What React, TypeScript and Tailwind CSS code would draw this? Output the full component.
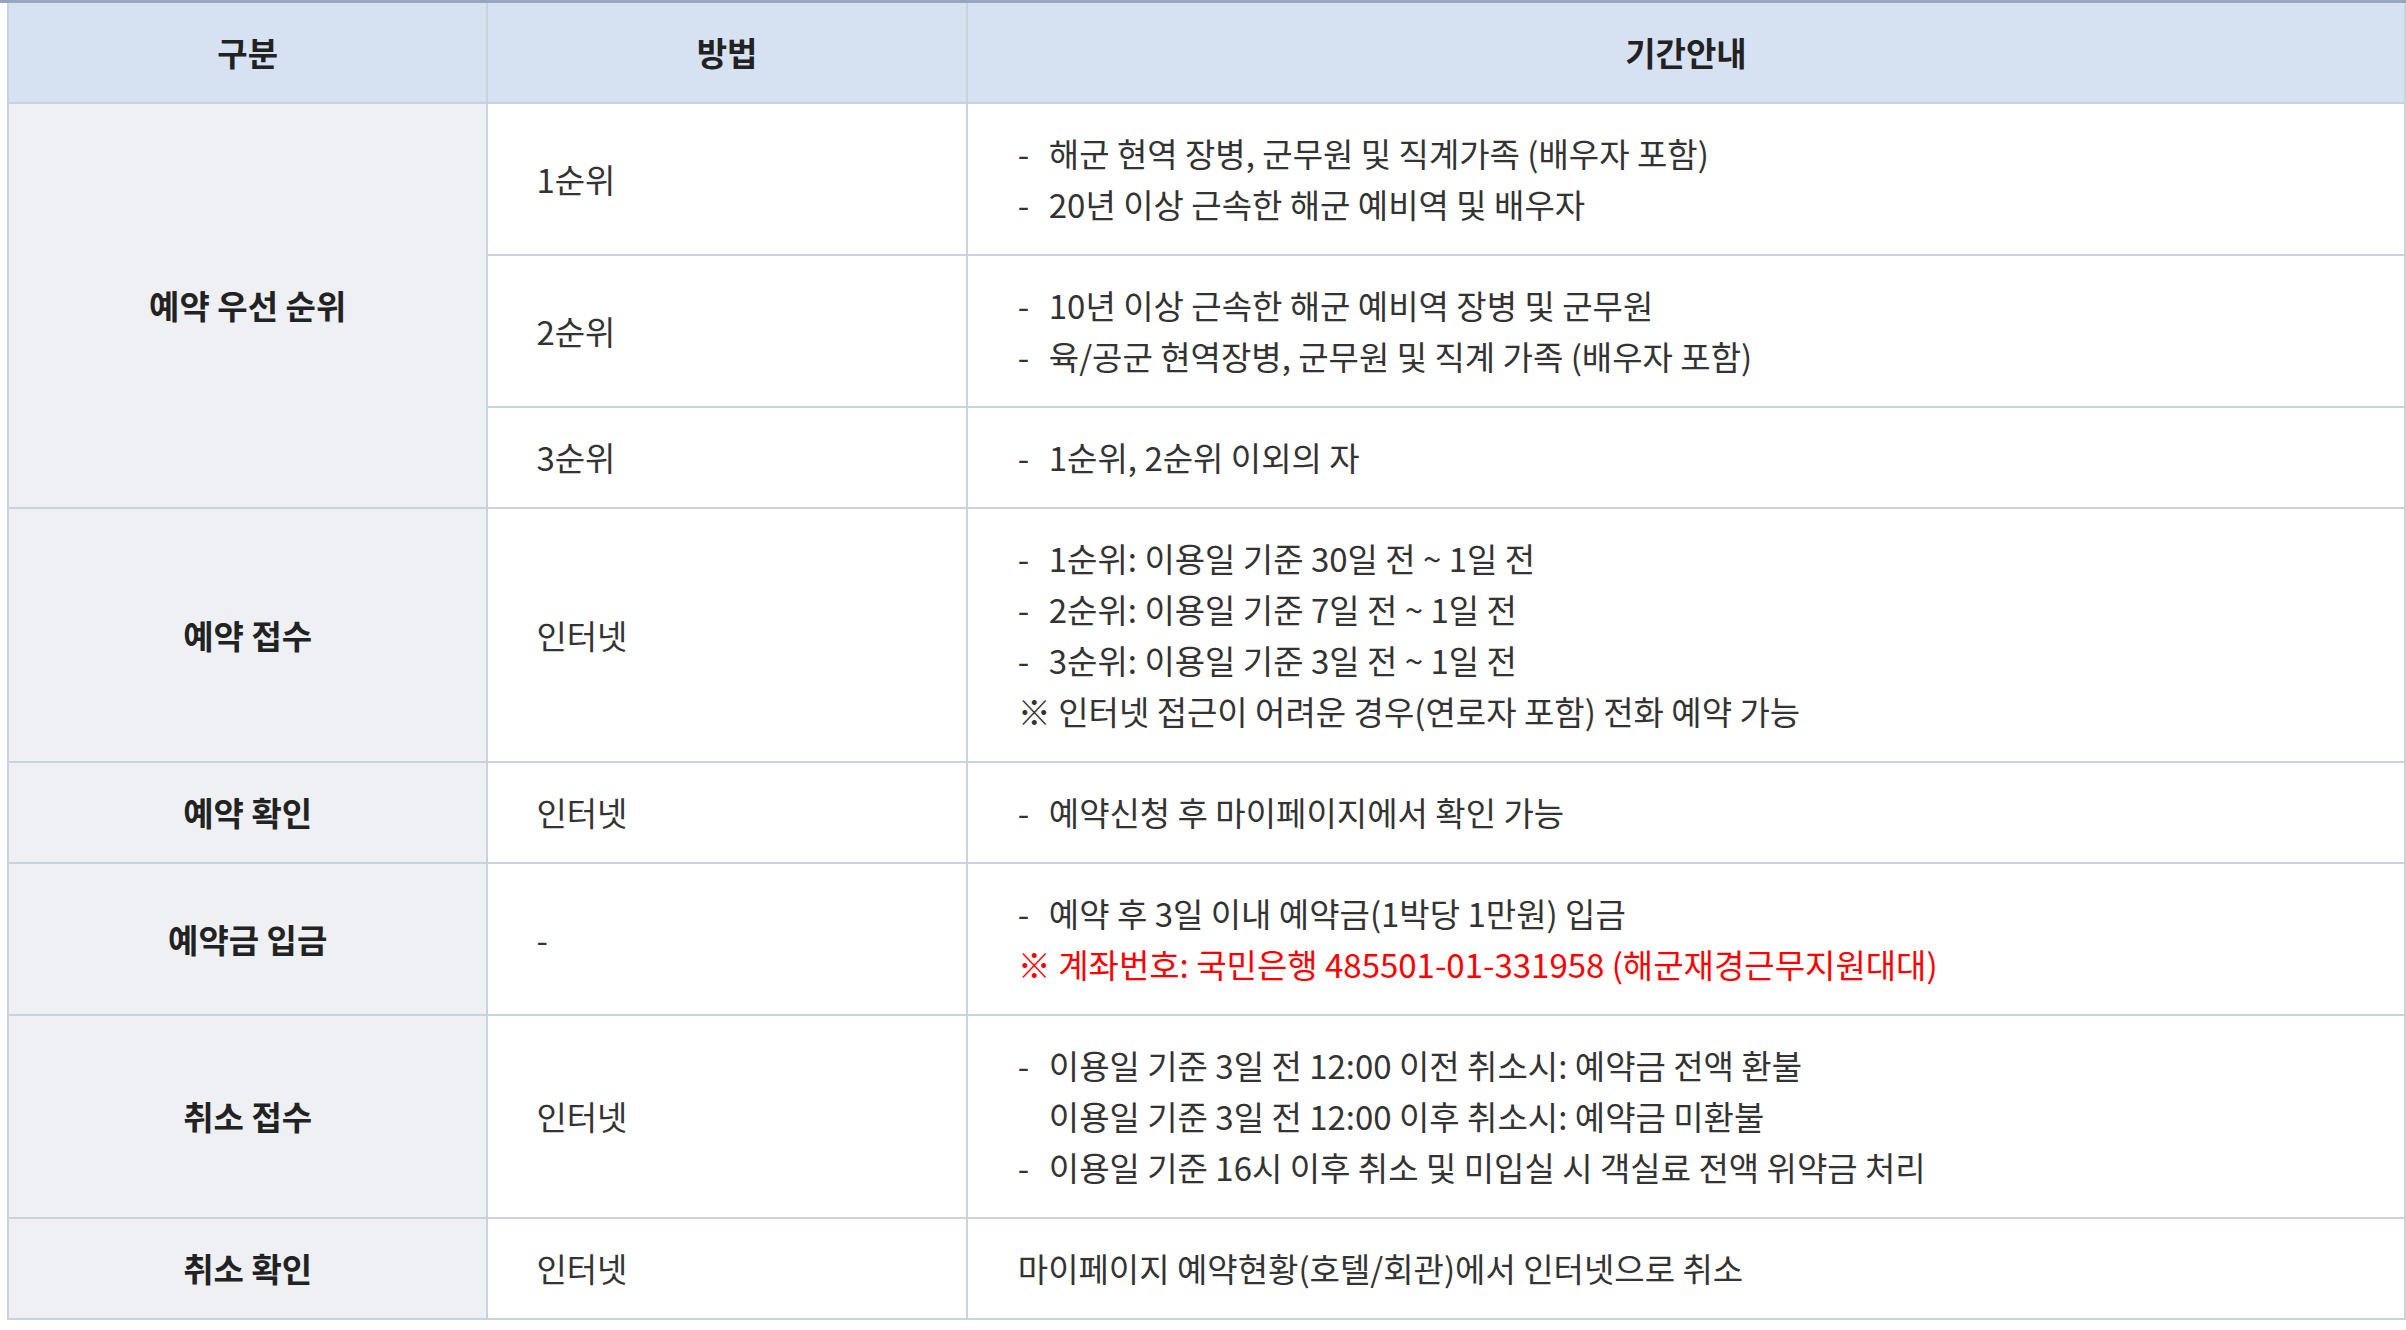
import React from 'react';

type Line = { text: string; dash?: boolean; indent?: boolean; red?: boolean };

interface Row {
  method: string;
  lines: Line[];
}

interface Group {
  title: string;
  rows: Row[];
}

const groups: Group[] = [
  {
    title: '예약 우선 순위',
    rows: [
      {
        method: '1순위',
        lines: [
          { text: '해군 현역 장병, 군무원 및 직계가족 (배우자 포함)', dash: true },
          { text: '20년 이상 근속한 해군 예비역 및 배우자', dash: true },
        ],
      },
      {
        method: '2순위',
        lines: [
          { text: '10년 이상 근속한 해군 예비역 장병 및 군무원', dash: true },
          { text: '육/공군 현역장병, 군무원 및 직계 가족 (배우자 포함)', dash: true },
        ],
      },
      {
        method: '3순위',
        lines: [{ text: '1순위, 2순위 이외의 자', dash: true }],
      },
    ],
  },
  {
    title: '예약 접수',
    rows: [
      {
        method: '인터넷',
        lines: [
          { text: '1순위: 이용일 기준 30일 전 ~ 1일 전', dash: true },
          { text: '2순위: 이용일 기준 7일 전 ~ 1일 전', dash: true },
          { text: '3순위: 이용일 기준 3일 전 ~ 1일 전', dash: true },
          { text: '※ 인터넷 접근이 어려운 경우(연로자 포함) 전화 예약 가능' },
        ],
      },
    ],
  },
  {
    title: '예약 확인',
    rows: [
      {
        method: '인터넷',
        lines: [{ text: '예약신청 후 마이페이지에서 확인 가능', dash: true }],
      },
    ],
  },
  {
    title: '예약금 입금',
    rows: [
      {
        method: '-',
        lines: [
          { text: '예약 후 3일 이내 예약금(1박당 1만원) 입금', dash: true },
          { text: '※ 계좌번호: 국민은행 485501-01-331958 (해군재경근무지원대대)', red: true },
        ],
      },
    ],
  },
  {
    title: '취소 접수',
    rows: [
      {
        method: '인터넷',
        lines: [
          { text: '이용일 기준 3일 전 12:00 이전 취소시: 예약금 전액 환불', dash: true },
          { text: '이용일 기준 3일 전 12:00 이후 취소시: 예약금 미환불', indent: true },
          { text: '이용일 기준 16시 이후 취소 및 미입실 시 객실료 전액 위약금 처리', dash: true },
        ],
      },
    ],
  },
  {
    title: '취소 확인',
    rows: [
      {
        method: '인터넷',
        lines: [{ text: '마이페이지 예약현황(호텔/회관)에서 인터넷으로 취소' }],
      },
    ],
  },
];

const cell = 'border-2 border-[#c9d3df] py-[24px]';

function Detail({ lines }: { lines: Line[] }) {
  return (
    <div>
      {lines.map((l, i) => (
        <div key={i} className={`flex ${l.red ? 'text-[#ff0000]' : ''}`}>
          {l.dash && <span className="w-[31px] shrink-0">-</span>}
          {l.indent && <span className="w-[31px] shrink-0" />}
          <span>{l.text}</span>
        </div>
      ))}
    </div>
  );
}

export default function App() {
  return (
    <div className="bg-white min-h-screen font-['Noto_Sans_CJK_KR',sans-serif] text-[33px] leading-[51px] text-[#333]">
      <div className="border-t-[3px] border-[#95a7bf] pl-[7px]">
        <table className="w-full border-collapse table-fixed">
          <colgroup>
            <col className="w-[20%]" />
            <col className="w-[20%]" />
            <col className="w-[60%]" />
          </colgroup>
          <thead className="bg-[#d6e2f2]">
            <tr>
              <th className="border-2 border-t-0 border-[#c9d3df] py-[24px] font-bold text-[#222] text-center">구분</th>
              <th className="border-2 border-t-0 border-[#c9d3df] py-[24px] font-bold text-[#222] text-center">방법</th>
              <th className="border-2 border-t-0 border-[#c9d3df] py-[24px] font-bold text-[#222] text-center">기간안내</th>
            </tr>
          </thead>
          <tbody>
            {groups.map(g =>
              g.rows.map((r, ri) => (
                <tr key={g.title + ri}>
                  {ri === 0 && (
                    <td rowSpan={g.rows.length} className={`${cell} bg-[#eef0f4] text-center font-bold text-[#222]`}>
                      {g.title}
                    </td>
                  )}
                  <td className={`${cell} pl-[48px] align-middle`}>{r.method}</td>
                  <td className={`${cell} pl-[50px] align-middle`}>
                    <Detail lines={r.lines} />
                  </td>
                </tr>
              ))
            )}
          </tbody>
        </table>
      </div>
    </div>
  );
}
